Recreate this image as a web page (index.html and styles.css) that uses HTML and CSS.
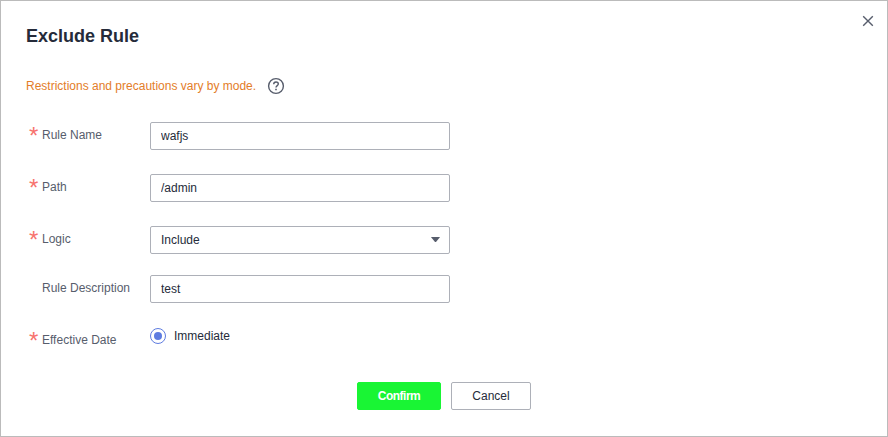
FILE: index.html
```html
<!DOCTYPE html>
<html lang="en">
<head>
    <meta charset="UTF-8">
    <meta name="viewport" content="width=device-width, initial-scale=1.0">
    <title>Exclude Rule</title>
    <link rel="stylesheet" href="styles.css">
</head>
<body>

    <div class="dialog">
        <div class="dialog-header">
            <h1>Exclude Rule</h1>
            <button type="button" class="close" aria-label="Close">
                <svg width="12" height="12" viewBox="0 0 12 12">
                    <path d="M1.2 1.2L10.8 10.8M10.8 1.2L1.2 10.8" fill="none" stroke="#575d6c" stroke-width="1.4"/>
                </svg>
            </button>
        </div>

        <div class="notice">
            <span>Restrictions and precautions vary by mode.</span>
            <svg width="18" height="18" viewBox="0 0 18 18" fill="none" stroke="#575d6c">
                <circle cx="9" cy="9" r="7.4" stroke-width="1.4"/>
                <path d="M6.7 7.3C6.7 5.8 7.6 5 9 5s2.3.8 2.3 2.1C11.3 8.6 9 8.7 9 10.6" stroke-width="1.4"/>
                <path d="M9 11.7v1.500" stroke-width="1.6"/>
            </svg>
        </div>

        <form class="rule-form">
            <div class="row">
                <label class="required" for="rule-name">Rule Name</label>
                <input type="text" class="field" id="rule-name" value="wafjs">
            </div>
            <div class="row">
                <label class="required" for="path">Path</label>
                <input type="text" class="field" id="path" value="/admin">
            </div>
            <div class="row row-logic">
                <label class="required" for="logic">Logic</label>
                <button type="button" class="field select" id="logic">
                    <span>Include</span>
                    <svg width="9" height="6" viewBox="0 0 9 6">
                        <path d="M0.500 0h8q.5 0 .2.5L5.200 4.800q-.7.600-1.400 0L.3.500Q0 0 .5 0z" fill="#575d6c"/>
                    </svg>
                </button>
            </div>
            <div class="row">
                <label for="description">Rule Description</label>
                <input type="text" class="field" id="description" value="test">
            </div>
            <div class="row row-date">
                <label class="required" for="immediate">Effective Date</label>
                <div class="radio">
                    <input type="radio" id="immediate" name="date" checked>
                    <span>Immediate</span>
                </div>
            </div>
        </form>

        <div class="actions">
            <button type="button" class="btn btn-primary">Confirm</button>
            <button type="button" class="btn">Cancel</button>
        </div>
    </div>

</body>
</html>
```
FILE: styles.css
```css
* {
    box-sizing: border-box;
}

body {
    margin: 0;
    font-family: "Liberation Sans", Arial, sans-serif;
    font-size: 12px;
    color: #252b3a;
    background-color: #fff;
}

button,
input {
    margin: 0;
    font: inherit;
    color: inherit;
}

.dialog {
    height: 437px;
    padding: 0 25px;
    border: 1px solid #bbb;
}

.dialog-header {
    display: flex;
    justify-content: space-between;
    align-items: flex-start;
    height: 75px;
}

h1 {
    margin: 24px 0 0;
    font-size: 18px;
    line-height: 22px;
}

.close {
    display: flex;
    margin: 14px -12px 0 0;
    padding: 0;
    border: none;
    background: none;
}

.notice {
    display: flex;
    align-items: center;
    gap: 11px;
    height: 20px;
    color: #e37d29;
}

.rule-form {
    margin-top: 26px;
}

.row {
    display: flex;
    align-items: flex-start;
    height: 28px;
    margin-bottom: 24px;
}

.row-logic {
    margin-bottom: 21px;
}

.row label {
    display: flex;
    width: 124px;
    padding-left: 16px;
    line-height: 26px;
    color: #575d6c;
}

.row .required {
    padding-left: 3px;
}

.required::before {
    content: "*";
    width: 13px;
    height: 26px;
    font-size: 24px;
    line-height: 28px;
    color: #f7736e;
}

.field {
    width: 300px;
    height: 28px;
    padding: 0 10px;
    border: 1px solid #adb0b8;
    border-radius: 2px;
    background-color: #fff;
}

.select {
    display: flex;
    justify-content: space-between;
    align-items: center;
    padding-right: 9px;
}

.select svg {
    margin-bottom: 1px;
}

.row-date {
    margin-bottom: 0;
}

.radio {
    display: flex;
    align-items: center;
    gap: 8px;
    height: 16px;
    margin-top: 1px;
}

.radio input {
    appearance: none;
    width: 16px;
    height: 16px;
    padding: 3px;
    border: 1px solid #5e7ce0;
    border-radius: 50%;
    background: #5e7ce0 content-box;
}

.actions {
    display: flex;
    justify-content: center;
    gap: 10px;
    margin-top: 27px;
}

.btn {
    width: 80px;
    height: 28px;
    padding: 0;
    border: 1px solid #adb0b8;
    border-radius: 2px;
    background-color: #fff;
}

.btn-primary {
    width: 84px;
    border-color: #19f534;
    background-color: #19f534;
    color: #fff;
    font-weight: bold;
    letter-spacing: -0.5px;
}
```
